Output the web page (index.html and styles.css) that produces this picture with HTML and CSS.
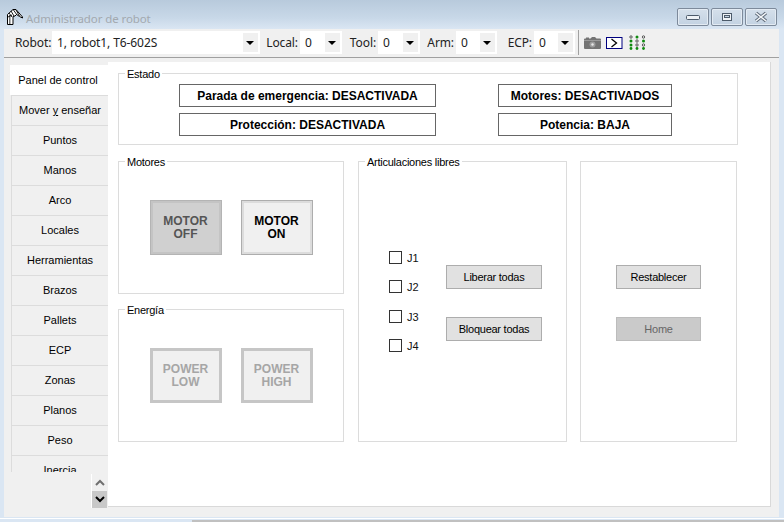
FILE: index.html
```html
<!DOCTYPE html>
<html lang="es">
<head>
    <meta charset="UTF-8">
    <title>Administrador de robot</title>
    <link rel="stylesheet" href="styles.css">
</head>
<body>
<div class="window">
    <div class="titlebar">
        <svg class="app-icon" width="18" height="16" viewBox="0 0 18 16">
            <path d="M1.5 15.5V5.5L7 .5h3l6.5 7.5v1l-3-1.5-3-2L9 7l-2 .5v8z" fill="#fff" stroke="#000"/>
            <path d="M5 2l3 5M7.5 1L11 6M10 1l3.5 6M3 4l3 4M2 8l4-2" fill="none" stroke="#000" stroke-width=".9"/>
            <path d="M3 15V6h1.5v9z" fill="#000" opacity=".55"/>
        </svg>
        <span class="title-text">Administrador de robot</span>
        <div class="win-buttons">
            <div class="win-btn">
                <svg width="16" height="8" viewBox="0 0 16 8"><rect x="1.5" y="2.5" width="13" height="4" rx="1" fill="#eef2f6" stroke="#4c5a6a"/></svg>
            </div>
            <div class="win-btn">
                <svg width="12" height="10" viewBox="0 0 12 10"><rect x="1.5" y="1.5" width="9" height="7" fill="#eef2f6" stroke="#4c5a6a"/><rect x="3.5" y="3.5" width="5" height="2" fill="#c4d3e3" stroke="#4c5a6a"/></svg>
            </div>
            <div class="win-btn">
                <svg width="16" height="12" viewBox="0 0 16 12"><path d="M3 2l10 8M13 2L3 10" stroke="#5b6776" stroke-width="3.4"/><path d="M3 2l10 8M13 2L3 10" stroke="#f2f5f8" stroke-width="1.6"/></svg>
            </div>
        </div>
    </div>

    <div class="client">
        <div class="toolbar">
            <span class="tool-label">Robot:</span>
            <div class="combo combo-robot"><span>1, robot1, T6-602S</span><i class="combo-arrow"></i></div>
            <span class="tool-label">Local:</span>
            <div class="combo"><span>0</span><i class="combo-arrow"></i></div>
            <span class="tool-label">Tool:</span>
            <div class="combo"><span>0</span><i class="combo-arrow"></i></div>
            <span class="tool-label">Arm:</span>
            <div class="combo"><span>0</span><i class="combo-arrow"></i></div>
            <span class="tool-label">ECP:</span>
            <div class="combo"><span>0</span><i class="combo-arrow"></i></div>
            <div class="tool-icons">
                <svg width="17" height="12" viewBox="0 0 17 12">
                    <path d="M1 1.5h1V.5h3v1h1.5L8 0h3l1.5 1.5H16a1 1 0 0 1 1 1V11a1 1 0 0 1-1 1H1a1 1 0 0 1-1-1V2.5a1 1 0 0 1 1-1z" fill="#747474"/>
                    <rect x="0" y="3" width="17" height="1" fill="#9a9a9a"/>
                    <circle cx="8.5" cy="7.5" r="3" fill="#9c9c9c"/>
                    <circle cx="8.5" cy="7.5" r="1.2" fill="#e8e8e8"/>
                </svg>
                <svg width="17" height="12" viewBox="0 0 17 12">
                    <rect x=".5" y=".5" width="15.5" height="11" fill="#fff" stroke="#000080"/>
                    <path d="M5.5 2l5 4-5 4" fill="none" stroke="#000" stroke-width="1.3"/>
                </svg>
                <svg class="dots" width="17" height="15" viewBox="0 0 17 15">
                    <g fill="none" stroke="#333" stroke-width=".8">
                        <circle cx="2" cy="2" r="1.2"/><circle cx="14.5" cy="2" r="1.2"/>
                        <circle cx="8" cy="6" r="1.2"/>
                        <circle cx="8" cy="10" r="1.2"/><circle cx="14.5" cy="10" r="1.2"/>
                    </g>
                    <g fill="#0f8a0f">
                        <circle cx="8" cy="2" r="1.5"/>
                        <circle cx="2" cy="6" r="1.5"/><circle cx="14.5" cy="6" r="1.5"/>
                        <circle cx="2" cy="10" r="1.5"/>
                        <circle cx="2" cy="13.5" r="1.4"/><circle cx="8" cy="13.5" r="1.4"/><circle cx="14.5" cy="13.5" r="1.4"/>
                    </g>
                </svg>
            </div>
        </div>

        <div class="main">
            <div class="tab-col">
                <div class="tab-list">
                    <div class="tab tab-active">Panel de control</div>
                    <div class="tab"><span>Mover <u>y</u> enseñar</span></div>
                    <div class="tab">Puntos</div>
                    <div class="tab">Manos</div>
                    <div class="tab">Arco</div>
                    <div class="tab">Locales</div>
                    <div class="tab">Herramientas</div>
                    <div class="tab">Brazos</div>
                    <div class="tab">Pallets</div>
                    <div class="tab">ECP</div>
                    <div class="tab">Zonas</div>
                    <div class="tab">Planos</div>
                    <div class="tab">Peso</div>
                    <div class="tab">Inercia</div>
                </div>
                <div class="tab-scroll">
                    <div class="scroll-btn">
                        <svg width="10" height="7" viewBox="0 0 10 7"><path d="M1 6l4-4 4 4" fill="none" stroke="#707070" stroke-width="2"/></svg>
                    </div>
                    <div class="scroll-btn scroll-btn-hot">
                        <svg width="10" height="7" viewBox="0 0 10 7"><path d="M1 1l4 4 4-4" fill="none" stroke="#000" stroke-width="2"/></svg>
                    </div>
                </div>
            </div>

            <div class="panel">
                <div class="group group-estado">
                    <span class="group-title">Estado</span>
                    <div class="status-grid">
                        <div class="status">Parada de emergencia: DESACTIVADA</div>
                        <div class="status">Motores: DESACTIVADOS</div>
                        <div class="status">Protección: DESACTIVADA</div>
                        <div class="status">Potencia: BAJA</div>
                    </div>
                </div>

                <div class="lower">
                    <div class="group group-pair">
                        <span class="group-title">Motores</span>
                        <button class="big-btn big-off">MOTOR<br>OFF</button>
                        <button class="big-btn big-on">MOTOR<br>ON</button>
                    </div>

                    <div class="group group-joints">
                        <span class="group-title">Articulaciones libres</span>
                        <div class="checks">
                            <label class="check"><i class="check-box"></i>J1</label>
                            <label class="check"><i class="check-box"></i>J2</label>
                            <label class="check"><i class="check-box"></i>J3</label>
                            <label class="check"><i class="check-box"></i>J4</label>
                        </div>
                        <div class="btn-col">
                            <button class="btn btn-wide">Liberar todas</button>
                            <button class="btn btn-wide">Bloquear todas</button>
                        </div>
                    </div>

                    <div class="group group-reset">
                        <div class="btn-col">
                            <button class="btn">Restablecer</button>
                            <button class="btn btn-disabled">Home</button>
                        </div>
                    </div>

                    <div class="group group-pair">
                        <span class="group-title">Energía</span>
                        <button class="big-btn big-dim">POWER<br>LOW</button>
                        <button class="big-btn big-dim">POWER<br>HIGH</button>
                    </div>
                </div>
            </div>
        </div>
    </div>
    <div class="bottom-strip"><div class="bottom-thumb"></div></div>
</div>
</body>
</html>
```

FILE: styles.css
```css
* {
    box-sizing: border-box;
}

html, body {
    margin: 0;
    height: 522px;
    overflow: hidden;
}

body {
    font-family: "Liberation Sans", Arial, sans-serif;
    font-size: 11px;
    color: #000;
    background: #dae6f3;
}

.window {
    width: 784px;
    height: 522px;
    display: flex;
    flex-direction: column;
    background: linear-gradient(#b8cadc, #c8d8e8 18px, #dae6f3 29px);
}

/* title bar */
.titlebar {
    height: 29px;
    flex: none;
    display: flex;
    align-items: flex-start;
    padding: 8px 7px 0 6px;
}

.app-icon {
    margin-top: 1px;
    flex: none;
}

.title-text {
    margin: 3px 0 0 2px;
    font-family: "Noto Sans", sans-serif;
    font-size: 11.5px;
    letter-spacing: -0.1px;
    line-height: 15px;
    color: #a3a9af;
}

.win-buttons {
    margin-left: auto;
    display: flex;
    gap: 2px;
}

.win-btn {
    width: 32px;
    height: 18px;
    border: 1px solid #7d8a9b;
    border-radius: 2px;
    background: linear-gradient(#d5e0eb, #c3d2e2);
    box-shadow: inset 0 0 0 1px #e3ebf3;
    display: flex;
    align-items: center;
    justify-content: center;
}

/* client area */
.client {
    height: 488px;
    flex: none;
    margin: 0 5px 0 4px;
    background: #f0f0f0;
    display: flex;
    flex-direction: column;
}

.toolbar {
    height: 29px;
    flex: none;
    display: grid;
    grid-template-columns: 37px 208px 40px 42px 36px 42px 36px 41px 37px 41px auto;
    align-items: center;
    padding: 0 0 1px 11px;
    border-bottom: 1px solid #a0a0a0;
    font-family: "Noto Sans", sans-serif;
    font-size: 12px;
    letter-spacing: -0.1px;
    color: #222;
}

.tool-label {
    text-align: right;
    padding-right: 2px;
    white-space: nowrap;
}

.combo {
    height: 23px;
    padding: 2px 2px 2px 5px;
    background: #fff;
    display: flex;
    align-items: center;
    justify-content: space-between;
}

.combo-arrow {
    width: 15px;
    height: 19px;
    background: #f0f0f0;
    position: relative;
}

.combo-arrow::after {
    content: "";
    position: absolute;
    left: 3px;
    top: 8px;
    border: 4px solid transparent;
    border-top: 4px solid #000;
    border-bottom: 0;
}

.tool-icons {
    height: 25px;
    margin-left: 3px;
    padding-left: 5px;
    border-left: 1px solid #a0a0a0;
    display: flex;
    align-items: center;
    gap: 5px;
}

.dots {
    margin-left: 1px;
}

.main {
    flex: 1;
    display: flex;
    padding: 4px 8px 10px 6px;
    min-height: 0;
}

/* side tabs */
.tab-col {
    width: 98px;
    flex: none;
    position: relative;
}

.tab-list {
    height: 407px;
    margin-top: 3px;
    overflow: hidden;
}

.tab {
    height: 30px;
    border-top: 1px solid #dcdcdc;
    border-left: 1px solid #dcdcdc;
    background: #f0f0f0;
    display: flex;
    align-items: center;
    justify-content: center;
    padding-bottom: 1px;
    margin-left: 1px;
    white-space: nowrap;
}

.tab-active {
    background: #fff;
    border-color: #fff;
    margin-left: 0;
    padding-right: 3px;
}

.tab-scroll {
    position: absolute;
    right: 1px;
    top: 412px;
    width: 16px;
    border-left: 1px solid #fff;
}

.scroll-btn {
    height: 17px;
    display: flex;
    align-items: center;
    justify-content: center;
}

.scroll-btn-hot {
    background: #c8c8c8;
}

.panel {
    flex: 1;
    background: #fff;
    border-right: 1px solid #d9d9d9;
    border-bottom: 1px solid #d9d9d9;
    padding: 11px 10px;
}

/* group boxes */
.group {
    position: relative;
    border: 1px solid #dcdcdc;
}

.group-title {
    position: absolute;
    left: 6px;
    top: -6px;
    padding: 0 2px;
    background: #fff;
    line-height: 13px;
    letter-spacing: -0.25px;
    white-space: nowrap;
}

.group-estado {
    width: 620px;
    height: 72px;
    margin-bottom: 16px;
    padding: 10px 0 0 60px;
}

.status-grid {
    display: grid;
    grid-template-columns: 257px 174px;
    grid-auto-rows: 23px;
    column-gap: 62px;
    row-gap: 6px;
}

.status {
    border: 1px solid #666;
    display: flex;
    align-items: center;
    justify-content: center;
    font-size: 12px;
    font-weight: bold;
    white-space: nowrap;
}

.lower {
    display: grid;
    grid-template-columns: 226px 209px 157px;
    grid-template-rows: 133px 133px;
    column-gap: 14px;
    row-gap: 15px;
}

.group-pair {
    display: flex;
    gap: 19px;
    padding: 38px 0 0 31px;
}

.group-joints {
    grid-column: 2;
    grid-row: 1 / 3;
    display: flex;
    padding: 89px 0 0 30px;
}

.group-reset {
    grid-column: 3;
    grid-row: 1 / 3;
    margin-left: -1px;
    width: 157px;
    display: flex;
    justify-content: center;
    padding-top: 103px;
}

.big-btn {
    width: 72px;
    height: 55px;
    padding: 0 1px 0 0;
    font-family: "Liberation Sans", Arial, sans-serif;
    font-size: 12px;
    line-height: 13px;
    font-weight: bold;
}

.big-off {
    border: 3px solid #c4c4c4;
    outline: 1px solid #b4b4b4;
    outline-offset: -1px;
    background: #d0d0d0;
    color: #555;
}

.big-on {
    border: 3px solid #dcdcdc;
    outline: 1px solid #adadad;
    outline-offset: -1px;
    background: #f0f0f0;
    color: #000;
}

.big-dim {
    border: 3px solid #c6c6c6;
    background: #f0f0f0;
    color: #a6a6a6;
}

.checks {
    width: 57px;
    flex: none;
    display: grid;
    grid-auto-rows: 29.4px;
}

.check {
    display: flex;
    align-items: flex-start;
    gap: 5px;
    line-height: 15px;
    color: #111;
}

.check-box {
    width: 13px;
    height: 13px;
    border: 1px solid #333;
    background: #fff;
}

.btn-col {
    display: flex;
    flex-direction: column;
    gap: 28px;
    padding-top: 14px;
}

.group-reset .btn-col {
    padding-top: 0;
}

.btn {
    width: 85px;
    height: 24px;
    padding: 0;
    border: 1px solid #adadad;
    background: #e1e1e1;
    font-family: "Liberation Sans", Arial, sans-serif;
    font-size: 11px;
    letter-spacing: -0.25px;
    color: #000;
}

.btn-wide {
    width: 96px;
}

.btn-disabled {
    background: #cacaca;
    border-color: #bcbcbc;
    color: #666;
}

.bottom-strip {
    flex: 1;
    margin-top: 1px;
    padding-top: 1px;
    border-top: 1px solid #fff;
}

.bottom-thumb {
    height: 4px;
    margin-left: 192px;
    background: #c0c0c0;
}
```
